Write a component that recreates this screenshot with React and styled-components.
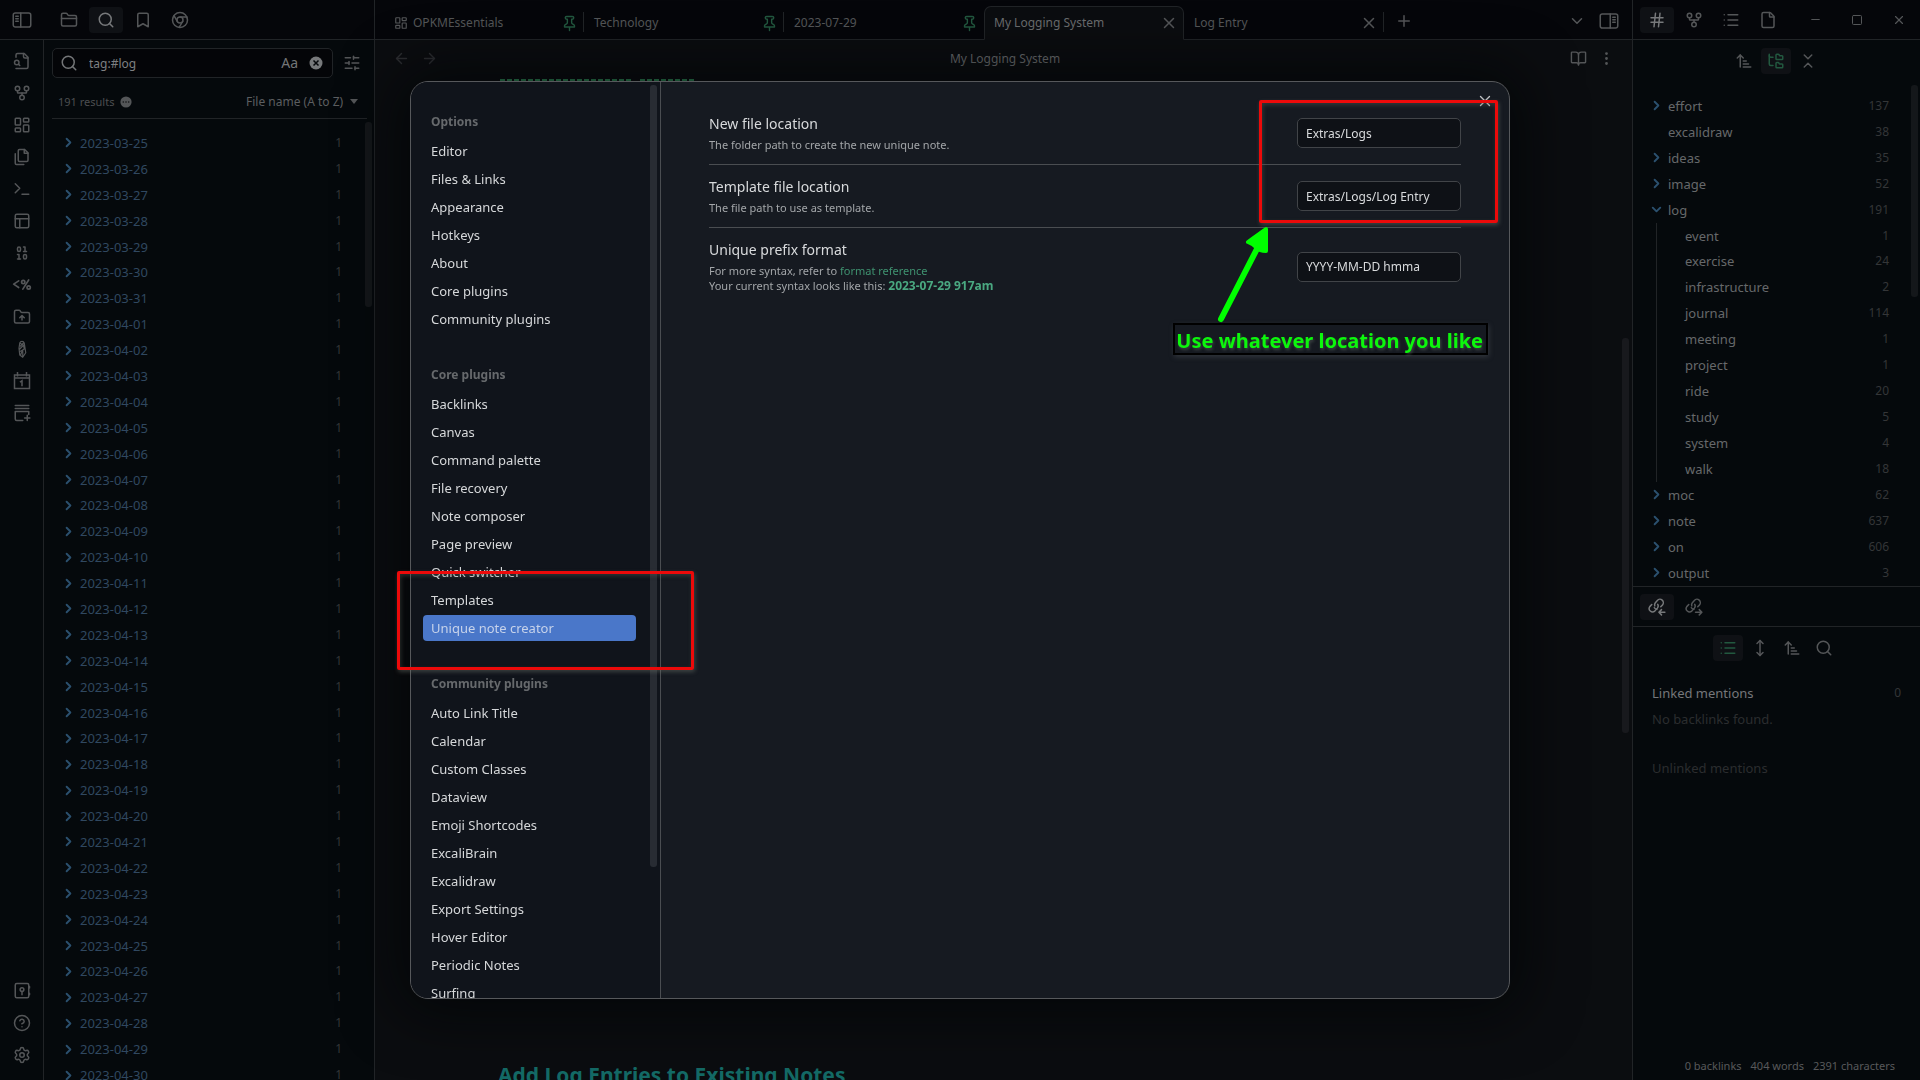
import React from "react";
import styled, { createGlobalStyle, css } from "styled-components";
import {
  Search, Bookmark, GitFork, LayoutDashboard, Binary, SlidersHorizontal, ChevronRight, ChevronDown,
  X, Plus, ArrowLeft, ArrowRight, BookOpen, EllipsisVertical, Hash, List, File, Minus, Square,
  ArrowUpNarrowWide, FolderTree, ChevronsDownUp, MoveVertical, Settings, PanelsTopLeft,
} from "lucide-react";

const c = {
  header: "#05060a",
  side: "#05090c",
  main: "#0b0d10",
  line: "#212427",
  icon: "#545658",
  text: "#66686a",
  muted: "#343638",
  faint: "#2b2d2f",
  date: "#304860",
  chevron: "#2b506e",
  green: "#22583f",
  thumb: "#14171a",
};

const GlobalStyle = createGlobalStyle`
  *, *::before, *::after { box-sizing: border-box; }
  body { margin: 0; background: ${c.side}; overflow: hidden; }
  body, button, input, select { font-family: "Noto Sans", "Open Sans", sans-serif; font-size: 13px; }
  button { border: 0; padding: 0; background: none; color: inherit; text-align: left; }
  ul { list-style: none; margin: 0; padding: 0; }
  h1, h2, h3, p { margin: 0; }
  svg { flex: none; display: block; }
`;

/* ---------- icons ---------- */

const Glyph = ({ size = 18, children }) => (
  <svg width={size} height={size} viewBox="0 0 24 24" fill="none" stroke="currentColor"
    strokeWidth="2" strokeLinecap="round" strokeLinejoin="round" aria-hidden="true">{children}</svg>
);

const PanelIcon = ({ right }) => (
  <Glyph size={20}>
    <g transform={right ? "matrix(-1 0 0 1 24 0)" : undefined} strokeWidth="1.8">
      <rect x="1.5" y="3.5" width="21" height="17" rx="2.5" />
      <path d="M10.500 3.500v17M4.500 7.500h3M4.500 10.500h3M4.500 13.500h3" />
    </g>
  </Glyph>
);
const FolderIcon = () => (
  <Glyph>
    <path d="M4 20h16a2 2 0 0 0 2-2V8a2 2 0 0 0-2-2h-7.93a2 2 0 0 1-1.66-.9l-.82-1.2A2 2 0 0 0 7.930 3H4a2 2 0 0 0-2 2v13c0 1.100.9 2 2 2Z" />
    <path d="M2 10h20" />
  </Glyph>
);
const FolderUpIcon = () => (
  <Glyph>
    <path d="M4 20h16a2 2 0 0 0 2-2V8a2 2 0 0 0-2-2h-7.93a2 2 0 0 1-1.66-.9l-.82-1.2A2 2 0 0 0 7.930 3H4a2 2 0 0 0-2 2v13c0 1.100.9 2 2 2Z" />
    <path d="M12 10v6M9 13l3-3 3 3" />
  </Glyph>
);
const BrowserIcon = () => (
  <Glyph>
    <circle cx="12" cy="12" r="10" /><circle cx="12" cy="12" r="4" />
    <path d="M21.170 8H12M3.950 6.060 8.540 14M10.880 21.940 15.460 14" />
  </Glyph>
);
const FileSearchIcon = () => (
  <Glyph>
    <path d="M4 22h14a2 2 0 0 0 2-2V7l-5-5H6a2 2 0 0 0-2 2v3" />
    <path d="M14 2v4a2 2 0 0 0 2 2h4" /><circle cx="5" cy="14" r="3" /><path d="m9 18-1.500-1.500" />
  </Glyph>
);
const FilesIcon = () => (
  <Glyph>
    <path d="M15.500 2H8.600C7.700 2 7 2.700 7 3.600v12.800c0 .9.7 1.600 1.600 1.600h9.800c.9 0 1.600-.7 1.600-1.600V6.500L15.500 2z" />
    <path d="M3 7.600v12.800c0 .9.7 1.600 1.600 1.600h9.800M15 2v5h5" />
  </Glyph>
);
const PromptIcon = () => <Glyph><path d="m3 17 6-6-6-6M12 19h9" /></Glyph>;
const TemplateIcon = () => (
  <Glyph size={20}>
    <path d="M8 7 2 11l6 4M20 6l-7 11" /><circle cx="13.500" cy="8.500" r="2" /><circle cx="20" cy="15" r="2" />
  </Glyph>
);
const PencilIcon = () => (
  <Glyph>
    <g strokeWidth="1.6">
      <path d="M9 4c1-3 5-3 6 0l2 13-4 6-4-3-1-9zM9 4l5 3 1 5-5 3M10 8l4-4M9 12l5-5M13 22V13l-3 7" />
    </g>
  </Glyph>
);
const CalendarIcon = () => (
  <Glyph><path d="M2 4h20v18H2zM2 8h20M6 1v4M18 1v4M10 13l2-1.500V18" strokeLinecap="square" strokeLinejoin="miter" /></Glyph>
);
const StackPlusIcon = () => (
  <Glyph><path d="M3 2h18M3 6h18M21 14v-4H3v10c0 1.500.5 2 2 2h8M19 15v7M15.500 18.500h7" /></Glyph>
);
const VaultIcon = () => (
  <Glyph><rect x="3" y="2" width="18" height="19" rx="2" /><circle cx="12" cy="10" r="2.500" /><path d="M12 13v4M22 6v2M22 15v2" /></Glyph>
);
const HelpIcon = () => (
  <Glyph><circle cx="12" cy="12" r="10" /><path d="M9.100 9a3 3 0 0 1 5.800 1c0 2-3 3-3 3M12 17h.01" /></Glyph>
);
const PinIcon = () => (
  <Glyph size={17}>
    <path d="M12 17v5M5 17h14v-1.760a2 2 0 0 0-1.110-1.790l-1.780-.9A2 2 0 0 1 15 10.760V6h1a2 2 0 0 0 0-4H8a2 2 0 0 0 0 4h1v4.760a2 2 0 0 1-1.110 1.790l-1.780.9A2 2 0 0 0 5 15.240Z" />
  </Glyph>
);
const LinkIcon = ({ out }) => (
  <Glyph>
    <path d="M9 10.500a4.500 4.500 0 0 1 .8-4.300l2.700-3a4.500 4.500 0 0 1 6.800 6l-2.300 2.500" />
    <path d="M13 8.500a4.500 4.500 0 0 1-.5 5l-3.500 4a4.500 4.500 0 0 1-6.600-6L5 8.800M8.500 13a4 4 0 0 0 3.500 2" />
    <path d={out ? "M14 19h8M19 15.500l3.500 3.500-3.500 3.500" : "M22.500 19h-8M18 15.500 14.500 19l3.500 3.500"} />
  </Glyph>
);
const ClearIcon = () => (
  <svg width="14" height="14" viewBox="0 0 14 14" aria-hidden="true">
    <circle cx="7" cy="7" r="6.500" fill="#77797b" /><path d="m4.500 4.500 5 5m0-5-5 5" stroke="#06080b" strokeWidth="1.500" />
  </svg>
);
const DotsIcon = () => (
  <svg width="12" height="12" viewBox="0 0 12 12" aria-hidden="true">
    <circle cx="6" cy="6" r="5.600" fill="#545658" />
    <g fill="#101214"><circle cx="3.300" cy="6" r=".8" /><circle cx="6" cy="6" r=".8" /><circle cx="8.700" cy="6" r=".8" /></g>
  </svg>
);

/* ---------- shared parts ---------- */

const Workspace = styled.div`
  display: grid;
  grid-template-columns: 375px minmax(0, 1fr) 288px;
  height: 100vh;
  color: ${c.text};
`;

const Column = styled.section`
  display: flex;
  flex-direction: column;
  min-width: 0;
  min-height: 0;
  background: ${(p) => (p.$main ? c.main : c.side)};
  ${(p) => p.$edge === "right" && css`border-right: 1px solid ${c.line};`}
  ${(p) => p.$edge === "left" && css`border-left: 1px solid ${c.line};`}
`;

const TopBar = styled.header`
  display: flex;
  align-items: center;
  flex: none;
  height: 40px;
  background: ${c.header};
  border-bottom: 1px solid ${c.line};
  color: ${c.icon};
`;

const IconButton = styled.button`
  display: flex;
  align-items: center;
  justify-content: center;
  flex: none;
  width: ${(p) => p.$w || 34}px;
  height: 26px;
  border-radius: 4px;
  color: ${(p) => p.$color || c.icon};
  background: ${(p) => (p.$on ? "#0f1115" : "none")};
`;

const Thumb = styled.div`
  position: absolute;
  right: ${(p) => p.$right}px;
  top: ${(p) => p.$top}px;
  width: 7px;
  height: ${(p) => p.$length};
  border-radius: 3px;
  background: ${(p) => p.$color || c.thumb};
`;

/* ---------- left sidebar ---------- */

const LeftTop = styled(TopBar)`
  gap: 3px;
  padding-left: 5px;
`;
const Spacer = styled.div`
  flex: ${(p) => (p.$w ? "none" : 1)};
  width: ${(p) => p.$w || 0}px;
`;
const LeftBody = styled.div`
  display: flex;
  flex: 1;
  min-height: 0;
`;
const Ribbon = styled.nav`
  display: flex;
  flex-direction: column;
  align-items: center;
  gap: 6px;
  width: 44px;
  padding: 8px 0 12px;
  border-right: 1px solid ${c.line};
`;
const SearchPane = styled.div`
  position: relative;
  display: flex;
  flex-direction: column;
  flex: 1;
  min-width: 0;
  overflow: hidden;
  padding: 8px 7px 0 8px;
`;
const SearchRow = styled.div`
  display: flex;
  align-items: center;
  gap: 4px;
`;
const SearchBox = styled.label`
  display: flex;
  align-items: center;
  gap: 11px;
  flex: 1;
  min-width: 0;
  height: 30px;
  padding: 0 9px 0 7px;
  border: 1px solid ${c.line};
  border-radius: 5px;
  background: #040508;
  color: #737577;
`;
const SearchInput = styled.input`
  flex: 1;
  min-width: 0;
  padding: 0;
  border: 0;
  outline: 0;
  background: none;
  font-size: 12px;
  color: #7e8082;
`;
const MatchCase = styled.button`
  font-size: 14px;
  line-height: 20px;
`;
const ResultBar = styled.div`
  display: flex;
  align-items: center;
  gap: 6px;
  height: 41px;
  padding: 7px 9px 0 6px;
  border-bottom: 1px solid ${c.line};
  font-size: 11px;
  color: #4c4e50;
`;
const SortSelect = styled.select`
  appearance: none;
  padding: 0;
  border: 0;
  background: none;
  color: #5c5e60;
  font-size: 12px;
`;
const Triangle = styled.span`
  border: 4px solid transparent;
  border-top: 5px solid ${c.icon};
  border-bottom: 0;
`;
const ResultList = styled.ul`
  display: flex;
  flex-direction: column;
  flex: 1;
  margin: 11px 0 -8px;
  padding: 0 25px 0 9px;
`;
const TreeRow = styled.li`
  display: flex;
  align-items: center;
  flex: 1;
  min-height: 20px;
  color: ${(p) => p.$color};
`;
const RowChevron = styled.span`
  display: flex;
  justify-content: center;
  flex: none;
  width: 14px;
  margin-right: ${(p) => p.$gap}px;
  color: ${c.chevron};
`;
const RowName = styled.button`
  flex: 1;
  line-height: 20px;
`;
const Count = styled.span`
  font-size: 12px;
  line-height: 20px;
  color: ${c.muted};
`;

/* ---------- main pane ---------- */

const Tabs = styled(TopBar)`
  align-items: flex-end;
  padding: 0 13px 0 9px;
`;
const TabItem = styled.div`
  display: flex;
  align-items: center;
  gap: 5px;
  width: 200px;
  height: 34px;
  padding: 0 6px 0 10px;
  margin-bottom: -1px;
  color: ${(p) => (p.$active ? "#6a6c6e" : "#545658")};
  ${(p) => p.$active && css`
    background: ${c.main};
    border: 1px solid ${c.line};
    border-bottom-color: ${c.main};
    border-radius: 7px 7px 0 0;
    padding: 0 5px 0 9px;
  `}
`;
const TabName = styled.button`
  flex: 1;
  font-size: 12px;
  line-height: 20px;
`;
const TabAction = styled.button`
  display: flex;
  justify-content: center;
  width: 18px;
  color: ${(p) => (p.$pin ? c.green : c.icon)};
`;
const TabRule = styled.span`
  width: 1px;
  height: 20px;
  margin: 0 0 7px -1px;
  background: ${c.line};
`;
const TabTools = styled.div`
  display: flex;
  align-items: center;
  flex: ${(p) => (p.$end ? 1 : "none")};
  justify-content: ${(p) => (p.$end ? "flex-end" : "flex-start")};
  gap: 13px;
  height: 39px;
  padding-left: ${(p) => (p.$end ? 0 : 11)}px;
  margin-bottom: -1px;
`;
const ViewBar = styled.div`
  display: flex;
  align-items: center;
  flex: none;
  height: 37px;
  padding: 0 12px;
`;
const ViewTitle = styled.h1`
  flex: 1;
  padding-left: 3px;
  text-align: center;
  font-size: 12px;
  font-weight: 400;
  line-height: 20px;
  color: #6a6c6e;
`;
const Note = styled.article`
  position: relative;
  display: flex;
  flex-direction: column;
  justify-content: space-between;
  flex: 1;
  min-height: 0;
  overflow: hidden;
  padding: 2px 123px 0;
`;
const NoteHeading = styled.h2`
  height: 20px;
  font-size: 21px;
  line-height: 30px;
  white-space: nowrap;
  color: #146a66;
`;

/* ---------- right sidebar ---------- */

const RightTop = styled(TopBar)`
  gap: 3px;
  padding-left: 7px;
`;
const WindowButtons = styled.div`
  display: flex;
  flex: 1;
  justify-content: flex-end;
  gap: 8px;
  padding-right: 4px;
`;
const TagPane = styled.div`
  position: relative;
  display: flex;
  flex-direction: column;
  flex: 547 1 0;
  min-height: 0;
`;
const BacklinkPane = styled.div`
  display: flex;
  flex-direction: column;
  flex: 493 1 0;
  min-height: 0;
  border-top: 1px solid ${c.line};
`;
const PaneTools = styled.div`
  display: flex;
  justify-content: center;
  flex: none;
  gap: 2px;
  padding: 8px 2px 8px 0;
`;
const TagList = styled.ul`
  display: flex;
  flex-direction: column;
  flex: ${(p) => p.$rows} 1 0;
  ${(p) => !p.$nested && css`margin-top: 11px; padding: 0 31px 1px 16px;`}
  ${(p) => p.$nested && css`margin-left: 7px; padding-left: 28px; border-left: 1px solid ${c.line};`}
`;
const TagBranch = styled.li`
  display: flex;
  flex-direction: column;
  flex: ${(p) => p.$rows} 1 0;
`;
const TabStrip = styled.div`
  display: flex;
  align-items: center;
  flex: none;
  gap: 3px;
  height: 40px;
  padding-left: 7px;
  border-bottom: 1px solid ${c.line};
`;
const Mentions = styled.div`
  display: flex;
  flex-direction: column;
  flex: 1;
  padding: 11px 19px 0;
  line-height: 26px;
`;
const MentionTitle = styled.h3`
  display: flex;
  align-items: center;
  justify-content: space-between;
  font-size: 13px;
  font-weight: 400;
  color: ${(p) => (p.$dim ? c.faint : "#75777a")};
  margin-top: ${(p) => (p.$dim ? 23 : 0)}px;
`;
const Empty = styled.p`
  color: ${c.faint};
`;
const StatusBar = styled.footer`
  display: flex;
  justify-content: flex-end;
  gap: 9px;
  padding: 4px 25px 4px 0;
  font-size: 11px;
  line-height: 20px;
  color: #58595b;
`;

/* ---------- settings dialog ---------- */

const Overlay = styled.div`
  position: fixed;
  inset: 0;
  display: flex;
  align-items: center;
  justify-content: center;
`;
const DialogFrame = styled.div`
  position: relative;
  width: 1100px;
  max-width: 90vw;
  height: 85vh;
`;
const Dialog = styled.div`
  display: grid;
  grid-template-columns: 250px minmax(0, 1fr);
  height: 100%;
  overflow: hidden;
  border: 1px solid #56585b;
  border-radius: 18px;
  background: #161a21;
  box-shadow: 0 2px 60px 10px rgba(2, 4, 6, 0.75);
`;
const SettingsNav = styled.nav`
  position: relative;
  overflow: hidden;
  padding: 27px 24px 0 12px;
  border-right: 1px solid #4a4d51;
  background: #10141b;
`;
const NavGroup = styled.section`
  display: flex;
  flex-direction: column;
  gap: 2px;
  margin-bottom: 30px;
`;
const NavHeading = styled.h2`
  padding: 0 8px;
  font-size: 12px;
  line-height: 26px;
  height: 27px;
  color: #66696c;
`;
const NavItem = styled.button`
  height: 26px;
  padding: 0 8px;
  border-radius: 4px;
  line-height: 26px;
  color: ${(p) => (p.$on ? "#c6d2ea" : "#d6d8da")};
  background: ${(p) => (p.$on ? "#4a77c9" : "none")};
`;
const SettingsBody = styled.div`
  padding: 20px 48px;
`;
const Setting = styled.div`
  display: flex;
  align-items: center;
  justify-content: space-between;
  padding: 12px 0;
  border-top: 1px solid ${(p) => (p.$first ? "transparent" : "#4a4d51")};
  margin-top: ${(p) => (p.$first ? -1 : 0)}px;
`;
const SettingName = styled.label`
  display: block;
  margin-bottom: 4px;
  font-size: 14px;
  line-height: 19px;
  color: #d8dadc;
`;
const SettingHint = styled.p`
  font-size: 11px;
  line-height: 15px;
  color: #a3a6a9;
`;
const HintLink = styled.a`
  color: #3f9270;
  text-decoration: none;
`;
const HintStrong = styled.strong`
  font-size: 12px;
  line-height: 1;
  color: #4aa881;
`;
const SettingInput = styled.input`
  width: 164px;
  height: 30px;
  padding: 0 8px;
  border: 1px solid #414448;
  border-radius: 5px;
  outline: 0;
  background: #0e1116;
  font-size: 12px;
  color: #d8dadc;
`;
const CloseButton = styled.button`
  position: absolute;
  top: 11px;
  right: 16px;
  color: #c0c2c4;
`;
const RedBox = styled.div`
  position: absolute;
  border: 3px solid #ec0a0a;
  border-radius: 2px;
  box-shadow: 1px 2px 4px rgba(110, 120, 110, 0.45), inset 1px 2px 4px rgba(90, 100, 90, 0.4);
  pointer-events: none;
`;
const LocationBox = styled(RedBox)`
  top: 19px;
  right: 12px;
  width: 239px;
  height: 123px;
`;
const PluginBox = styled(RedBox)`
  top: 490px;
  left: -13px;
  width: 297px;
  height: 99px;
`;
const Callout = styled.p`
  position: absolute;
  top: 242px;
  right: 22px;
  padding: 3px 3px 0 1px;
  border: 2px solid #000;
  font-size: 20px;
  font-weight: 700;
  line-height: 25px;
  white-space: nowrap;
  color: #0cf70c;
  box-shadow: 1px 2px 5px rgba(90, 95, 100, 0.4);
  text-shadow: 1px 2px 3px rgba(120, 130, 120, 0.4);
`;
const Arrow = styled.svg`
  position: absolute;
  top: 140px;
  right: 235px;
`;

/* ---------- data ---------- */

const dates = Array.from({ length: 37 }, (_, i) =>
  new Date(Date.UTC(2023, 2, 25 + i)).toISOString().slice(0, 10));

const tagsBefore = [["effort", 137, 1], ["excalidraw", 38, 0], ["ideas", 35, 1], ["image", 52, 1]];
const logTags = [["event", 1], ["exercise", 24], ["infrastructure", 2], ["journal", 114], ["meeting", 1],
  ["project", 1], ["ride", 20], ["study", 5], ["system", 4], ["walk", 18]];
const tagsAfter = [["moc", 62, 1], ["note", 637, 1], ["on", 606, 1], ["output", 3, 1]];

const navGroups = [
  ["Options", ["Editor", "Files & Links", "Appearance", "Hotkeys", "About", "Core plugins", "Community plugins"]],
  ["Core plugins", ["Backlinks", "Canvas", "Command palette", "File recovery", "Note composer", "Page preview",
    "Quick switcher", "Templates", "Unique note creator"]],
  ["Community plugins", ["Auto Link Title", "Calendar", "Custom Classes", "Dataview", "Emoji Shortcodes",
    "ExcaliBrain", "Excalidraw", "Export Settings", "Hover Editor", "Periodic Notes", "Surfing"]],
];

const ribbon = [
  ["Quick switcher", <FileSearchIcon />], ["Graph", <GitFork size={18} />], ["Canvas", <LayoutDashboard size={18} />],
  ["Copy", <FilesIcon />], ["Command palette", <PromptIcon />], ["Workspaces", <PanelsTopLeft size={18} />],
  ["Unique note", <Binary size={18} />], ["Templater", <TemplateIcon />], ["Publish", <FolderUpIcon />],
  ["Drawing", <PencilIcon />], ["Daily note", <CalendarIcon />], ["New card", <StackPlusIcon />],
];
const ribbonEnd = [["Vault", <VaultIcon />], ["Help", <HelpIcon />], ["Settings", <Settings size={18} />]];

/* ---------- sections ---------- */

const Tag = ({ name, count, branch, open }) => (
  <TreeRow $color={c.text}>
    <RowChevron $gap={5}>
      {open ? <ChevronDown size={15} strokeWidth={3} /> : branch ? <ChevronRight size={15} strokeWidth={3} /> : null}
    </RowChevron>
    <RowName>{name}</RowName>
    <Count>{count}</Count>
  </TreeRow>
);

const LeftSidebar = () => (
  <Column $edge="right">
    <LeftTop>
      <IconButton aria-label="Toggle sidebar"><PanelIcon /></IconButton>
      <Spacer $w={7} />
      <IconButton aria-label="Files"><FolderIcon /></IconButton>
      <IconButton aria-label="Search" $on $color="#77797b"><Search size={18} /></IconButton>
      <IconButton aria-label="Bookmarks"><Bookmark size={18} /></IconButton>
      <IconButton aria-label="Web"><BrowserIcon /></IconButton>
    </LeftTop>
    <LeftBody>
      <Ribbon>
        {ribbon.map(([label, icon]) => <IconButton key={label} aria-label={label}>{icon}</IconButton>)}
        <Spacer />
        {ribbonEnd.map(([label, icon]) => <IconButton key={label} aria-label={label}>{icon}</IconButton>)}
      </Ribbon>
      <SearchPane>
        <SearchRow>
          <SearchBox>
            <Search size={18} />
            <SearchInput aria-label="Search notes" defaultValue="tag:#log" />
            <MatchCase>Aa</MatchCase>
            <button aria-label="Clear"><ClearIcon /></button>
          </SearchBox>
          <IconButton $w={30} aria-label="Search settings"><SlidersHorizontal size={18} /></IconButton>
        </SearchRow>
        <ResultBar>
          <span>191 results</span>
          <DotsIcon />
          <Spacer />
          <SortSelect aria-label="Sort order"><option>File name (A to Z)</option></SortSelect>
          <Triangle />
        </ResultBar>
        <ResultList>
          {dates.map((d) => (
            <TreeRow key={d} $color={c.date}>
              <RowChevron $gap={5}><ChevronRight size={15} strokeWidth={3} /></RowChevron>
              <RowName>{d}</RowName>
              <Count>1</Count>
            </TreeRow>
          ))}
        </ResultList>
        <Thumb $right={2} $top={82} $length="185px" />
      </SearchPane>
    </LeftBody>
  </Column>
);

const MainPane = () => (
  <Column $main>
    <Tabs>
      <TabItem>
        <LayoutDashboard size={14} />
        <TabName>OPKMEssentials</TabName><TabAction $pin aria-label="Unpin"><PinIcon /></TabAction>
      </TabItem>
      <TabRule />
      <TabItem><TabName>Technology</TabName><TabAction $pin aria-label="Unpin"><PinIcon /></TabAction></TabItem>
      <TabRule />
      <TabItem><TabName>2023-07-29</TabName><TabAction $pin aria-label="Unpin"><PinIcon /></TabAction></TabItem>
      <TabItem $active><TabName>My Logging System</TabName><TabAction aria-label="Close tab"><X size={18} /></TabAction></TabItem>
      <TabItem><TabName>Log Entry</TabName><TabAction aria-label="Close tab"><X size={18} /></TabAction></TabItem>
      <TabRule />
      <TabTools><button aria-label="New tab"><Plus size={18} /></button></TabTools>
      <TabTools $end>
        <button aria-label="Tab list"><ChevronDown size={18} /></button>
        <button aria-label="Toggle right sidebar"><PanelIcon right /></button>
      </TabTools>
    </Tabs>
    <ViewBar>
      <IconButton $w={28} $color="#2c2e31" aria-label="Back"><ArrowLeft size={17} /></IconButton>
      <IconButton $w={28} $color="#2c2e31" aria-label="Forward"><ArrowRight size={17} /></IconButton>
      <ViewTitle>My Logging System</ViewTitle>
      <IconButton $w={28} aria-label="Reading view"><BookOpen size={17} /></IconButton>
      <IconButton $w={28} aria-label="More options"><EllipsisVertical size={17} /></IconButton>
    </ViewBar>
    <Note>
      <svg width="200" height="4" aria-hidden="true">
        <path d="M2 2H134M142 2h56" stroke="#2f8a58" strokeWidth="4" strokeDasharray="5 2" />
      </svg>
      <NoteHeading>Add Log Entries to Existing Notes</NoteHeading>
      <Thumb $right={3} $top={261} $length="395px" $color="#18191d" />
    </Note>
  </Column>
);

const RightSidebar = () => (
  <Column $edge="left">
    <RightTop>
      <IconButton $on $color="#77797b" aria-label="Tags"><Hash size={18} /></IconButton>
      <IconButton aria-label="Graph"><GitFork size={18} /></IconButton>
      <IconButton aria-label="Outline"><List size={18} /></IconButton>
      <IconButton aria-label="File"><File size={18} /></IconButton>
      <WindowButtons>
        <IconButton aria-label="Minimize"><Minus size={13} /></IconButton>
        <IconButton aria-label="Maximize"><Square size={12} /></IconButton>
        <IconButton aria-label="Close"><X size={14} /></IconButton>
      </WindowButtons>
    </RightTop>
    <TagPane>
      <PaneTools>
        <IconButton $w={30} aria-label="Sort"><ArrowUpNarrowWide size={18} /></IconButton>
        <IconButton $w={30} $on $color={c.green} aria-label="Nested"><FolderTree size={18} /></IconButton>
        <IconButton $w={30} aria-label="Collapse"><ChevronsDownUp size={18} /></IconButton>
      </PaneTools>
      <TagList $rows={19}>
        {tagsBefore.map(([n, k, b]) => <Tag key={n} name={n} count={k} branch={b} />)}
        <TagBranch $rows={11}>
          <Tag name="log" count={191} open />
          <TagList $nested $rows={10}>
            {logTags.map(([n, k]) => (
              <TreeRow key={n} $color={c.text}><RowName>{n}</RowName><Count>{k}</Count></TreeRow>
            ))}
          </TagList>
        </TagBranch>
        {tagsAfter.map(([n, k, b]) => <Tag key={n} name={n} count={k} branch={b} />)}
      </TagList>
      <Thumb $right={2} $top={45} $length="212px" />
    </TagPane>
    <BacklinkPane>
      <TabStrip>
        <IconButton $on $color="#77797b" aria-label="Backlinks"><LinkIcon /></IconButton>
        <IconButton aria-label="Outgoing links"><LinkIcon out /></IconButton>
      </TabStrip>
      <PaneTools>
        <IconButton $w={30} $on $color={c.green} aria-label="Collapse results"><List size={18} /></IconButton>
        <IconButton $w={30} aria-label="More context"><MoveVertical size={18} /></IconButton>
        <IconButton $w={30} aria-label="Sort"><ArrowUpNarrowWide size={18} /></IconButton>
        <IconButton $w={30} aria-label="Filter"><Search size={18} /></IconButton>
      </PaneTools>
      <Mentions>
        <MentionTitle>Linked mentions<Count>0</Count></MentionTitle>
        <Empty>No backlinks found.</Empty>
        <MentionTitle $dim>Unlinked mentions</MentionTitle>
      </Mentions>
      <StatusBar><span>0 backlinks</span><span>404 words</span><span>2391 characters</span></StatusBar>
    </BacklinkPane>
  </Column>
);

const SettingsDialog = () => (
  <Overlay>
    <DialogFrame>
      <Dialog role="dialog" aria-label="Settings">
        <SettingsNav>
          {navGroups.map(([title, items]) => (
            <NavGroup key={title}>
              <NavHeading>{title}</NavHeading>
              {items.map((n) => <NavItem key={n} $on={n === "Unique note creator"}>{n}</NavItem>)}
            </NavGroup>
          ))}
          <Thumb $right={3} $top={3} $length="calc(100% - 134px)" $color="#282c33" />
        </SettingsNav>
        <SettingsBody>
          <Setting $first>
            <div>
              <SettingName htmlFor="folder">New file location</SettingName>
              <SettingHint>The folder path to create the new unique note.</SettingHint>
            </div>
            <SettingInput id="folder" defaultValue="Extras/Logs" />
          </Setting>
          <Setting>
            <div>
              <SettingName htmlFor="template">Template file location</SettingName>
              <SettingHint>The file path to use as template.</SettingHint>
            </div>
            <SettingInput id="template" defaultValue="Extras/Logs/Log Entry" />
          </Setting>
          <Setting>
            <div>
              <SettingName htmlFor="prefix">Unique prefix format</SettingName>
              <SettingHint>For more syntax, refer to <HintLink href="#format">format reference</HintLink></SettingHint>
              <SettingHint>Your current syntax looks like this: <HintStrong>2023-07-29 917am</HintStrong></SettingHint>
            </div>
            <SettingInput id="prefix" defaultValue="YYYY-MM-DD hmma" />
          </Setting>
        </SettingsBody>
      </Dialog>
      <CloseButton aria-label="Close settings"><X size={18} strokeWidth={1.8} /></CloseButton>
      <LocationBox />
      <PluginBox />
      <Arrow width="65" height="110" viewBox="0 0 65 110" aria-hidden="true">
        <g stroke="#00ff00" fill="#00ff00" strokeLinecap="round" strokeLinejoin="round">
          <path d="M11 98 50 22" strokeWidth="6" />
          <path d="M56 8 38 21q5 2 8 5q4 4 10 4Z" strokeWidth="4" />
        </g>
      </Arrow>
      <Callout>Use whatever location you like</Callout>
    </DialogFrame>
  </Overlay>
);

export default function App() {
  return (
    <>
      <GlobalStyle />
      <Workspace>
        <LeftSidebar />
        <MainPane />
        <RightSidebar />
      </Workspace>
      <SettingsDialog />
    </>
  );
}
